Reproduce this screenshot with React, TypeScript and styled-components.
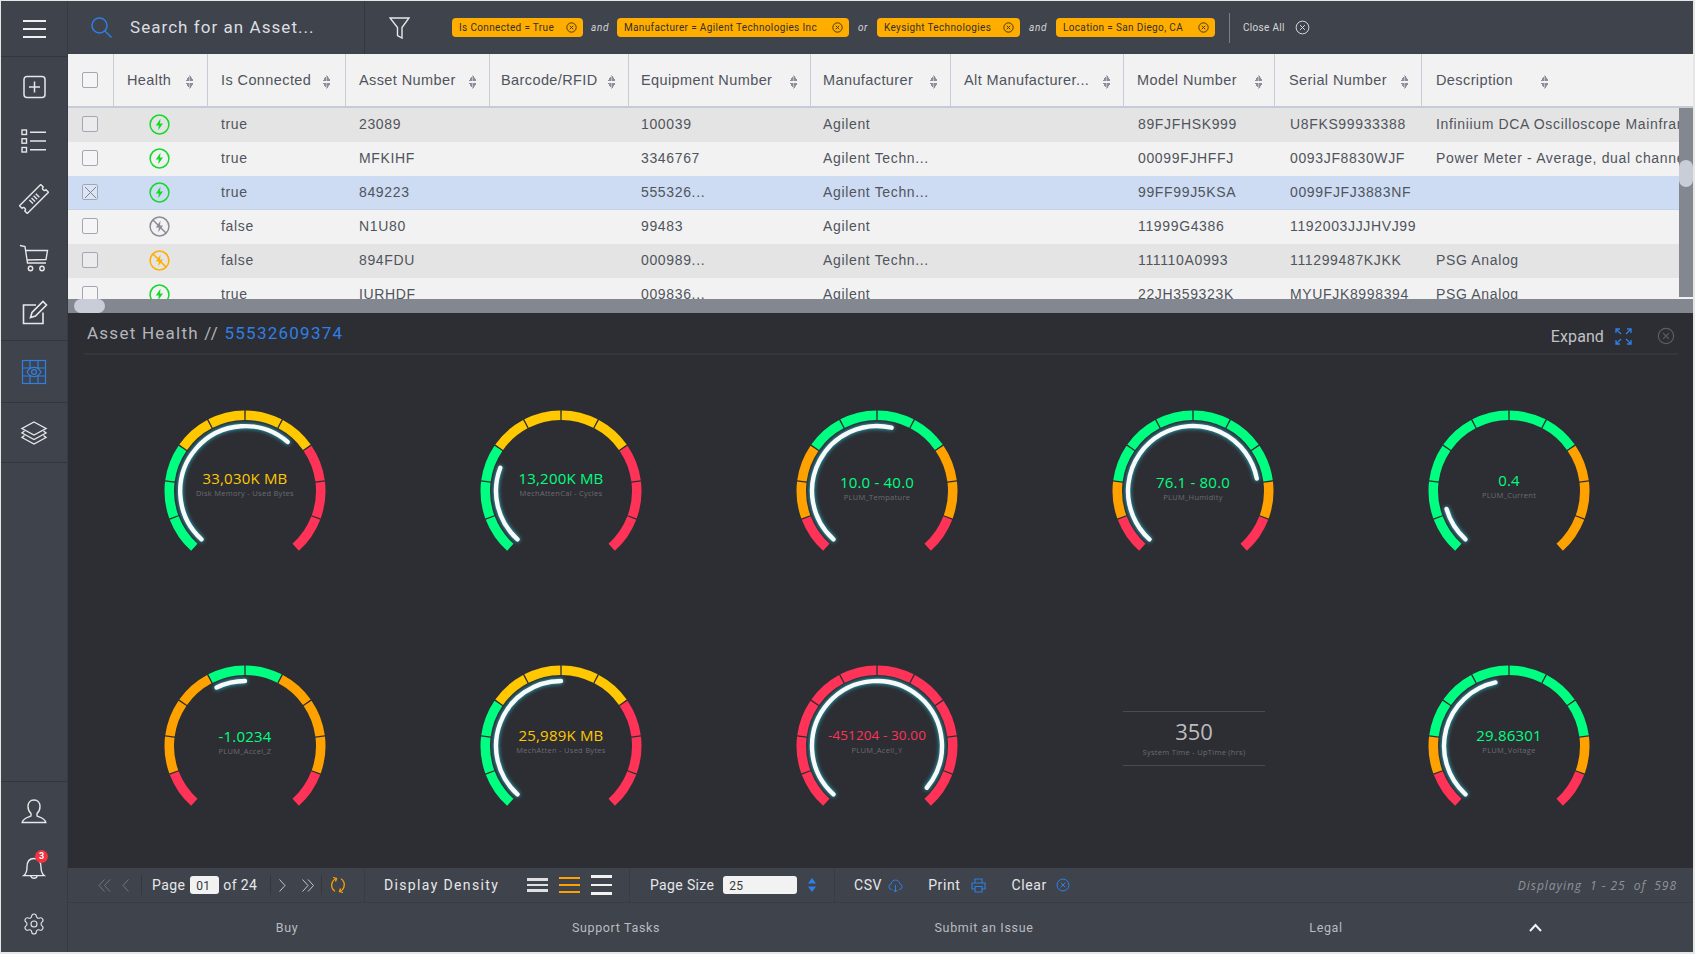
import React from 'react';
import styled, {createGlobalStyle} from 'styled-components';
import {Settings} from 'lucide-react';

const GlobalStyle = createGlobalStyle`
  html, body {
    margin: 0;
    padding: 0;
    background: #e6e6e6;
    overflow: hidden;
  }
  * {
    box-sizing: border-box;
  }
`;

const GREEN = '#00ff80';
const YELLOW = '#ffc800';
const ORANGE = '#ffa200';
const RED = '#ff3358';
const BLUE = '#2f7fe6';

const ui = `Roboto, "Liberation Sans", sans-serif`;
const tableFont = `"Liberation Sans", Arial, sans-serif`;
const gaugeFont = `"Open Sans", "Noto Sans", sans-serif`;

/* ---------- icons ---------- */

type IconProps = {size?: number; color?: string; sw?: number};

const Ico = ({size = 30, color = '#e6e7e9', sw = 1.4, children}: IconProps & {children: React.ReactNode}) => (
  <svg width={size} height={size} viewBox="0 0 30 30" fill="none" stroke={color} strokeWidth={sw} style={{display: 'block', flex: 'none'}}>
    {children}
  </svg>
);

const PlusBoxIcon = () => (
  <Ico sw={1.5}>
    <rect x="5" y="4.5" width="21" height="21" rx="3" />
    <path d="M15.5 9.5V20.5M10 15H21" />
  </Ico>
);
const ListIcon = () => (
  <Ico sw={1.4}>
    <rect x="3" y="4" width="4.5" height="4.5" />
    <rect x="3" y="12.7" width="4.5" height="4.5" />
    <rect x="3" y="21.5" width="4.5" height="4.5" />
    <path d="M11 6.2H27M11 15H27M11 23.7H27" />
  </Ico>
);
const TicketIcon = () => (
  <Ico sw={1.4}>
    <g transform="rotate(-45 15 15)">
      <path d="M0 9.5H30V13a2 2 0 0 0 0 4v3.5H0V17a2 2 0 0 0 0-4z" />
      <path d="M11 12.5V17.5M14 12.5V17.5M17 12.5V17.5M20 12.5V17.5" />
    </g>
  </Ico>
);
const CartIcon = () => (
  <Ico sw={1.4}>
    <path d="M1 2.5L6 3.5L8.5 20H27M7 7.5H28.5L27 16.5L8 17" />
    <circle cx="11.5" cy="25.5" r="2.2" />
    <circle cx="23" cy="25.5" r="2.2" />
  </Ico>
);
const EditIcon = () => (
  <Ico sw={1.6}>
    <path d="M24 15.5V26.5H4.5V8H17" />
    <path d="M11.5 20.5L13 15.5L24 4.5L27.5 8L16.5 19z" />
  </Ico>
);
const EyeGridIcon = () => (
  <Ico color={BLUE} sw={1.2}>
    <rect x="3.5" y="3.5" width="23" height="23" />
    <path d="M3.5 11H26.5M3.5 19H26.5M11 3.5V26.5M19 3.5V26.5" />
    <path d="M8 15C10 11.6 12.5 10.4 15 10.4S20 11.6 22 15C20 18.4 17.5 19.6 15 19.6S10 18.4 8 15z" fill="#3f434c" />
    <circle cx="15" cy="15" r="2.4" />
  </Ico>
);
const LayersIcon = () => (
  <Ico sw={1.4}>
    <path d="M15 4L27 10.5L15 17L3 10.5z" />
    <path d="M5.5 13L3 15L15 21.5L27 15L24.5 13" />
    <path d="M5.5 17.5L3 19.5L15 26L27 19.5L24.5 17.5" />
  </Ico>
);
const UserIcon = () => (
  <Ico sw={1.4}>
    <path d="M15 4c-4 0-6 3-6 6.5 0 3 1.2 5.4 3 7v2.5c-2.5 1.3-7.8 1.8-8.8 6.5h23.6c-1-4.7-6.3-5.2-8.8-6.5v-2.5c1.8-1.6 3-4 3-7C21 7 19 4 15 4z" />
  </Ico>
);
const BellIcon = () => (
  <Ico sw={1.4}>
    <path d="M15 5.5c-5 0-7 3.8-7 8.5 0 4.5-1 6.8-3.2 8.6h20.4C23 20.8 22 18.5 22 14c0-4.7-2-8.5-7-8.5z" />
    <path d="M11.8 22.8a3.3 3.3 0 0 0 6.4 0" />
  </Ico>
);

const HealthIcon = ({state}: {state: 'on' | 'off' | 'warn'}) => {
  const color = state === 'on' ? '#12d92a' : state === 'warn' ? '#ffae00' : '#8a8d97';
  return (
    <svg width="21" height="21" viewBox="0 0 21 21" style={{display: 'block'}}>
      <circle cx="10.5" cy="10.5" r="9.4" fill="none" stroke={color} strokeWidth="1.5" />
      <path d="M11.5 4.8L6.8 11.4H9.8L9.2 16.2L14 9.5H11z" fill={color} />
      {state !== 'on' && <path d="M4 4L17 17" stroke={color} strokeWidth="1.5" />}
    </svg>
  );
};

const CircleX = ({size = 11, color = '#4a3a10', sw = 1}: IconProps) => (
  <svg width={size} height={size} viewBox="0 0 20 20" fill="none" stroke={color} strokeWidth={sw * (20 / size)} style={{display: 'block', flex: 'none'}}>
    <circle cx="10" cy="10" r="8.5" />
    <path d="M6.8 6.8L13.2 13.2M13.2 6.8L6.8 13.2" />
  </svg>
);

const SortIcon = styled.span`
  display: block;
  flex: none;
  width: 7px;
  height: 14px;
  margin-top: 3px;
  background:
    linear-gradient(to top left, #8b8f99 50%, transparent 51%) 0 0 / 3.5px 6px no-repeat,
    linear-gradient(to top right, #8b8f99 50%, transparent 51%) 3.5px 0 / 3.5px 6px no-repeat,
    linear-gradient(to bottom left, #8b8f99 50%, transparent 51%) 0 8px / 3.5px 6px no-repeat,
    linear-gradient(to bottom right, #8b8f99 50%, transparent 51%) 3.5px 8px / 3.5px 6px no-repeat;
`;

/* ---------- layout ---------- */

const Frame = styled.div`
  display: flex;
  width: 1692px;
  height: 951px;
  margin: 1px 2px 2px 1px;
  font-family: ${ui};
  background: #3f434c;
  overflow: hidden;
`;

const Sidebar = styled.nav`
  display: flex;
  flex-direction: column;
  flex: none;
  width: 67px;
  background: #3f434c;
  border-right: 1px solid #383b43;
`;

const SideTop = styled.div`
  display: flex;
  align-items: center;
  justify-content: center;
  flex: none;
  height: 56px;
  border-bottom: 1px solid #33363d;
`;

const Hamburger = styled.span`
  display: block;
  width: 23px;
  height: 18px;
  border-top: 2px solid #f0f0f0;
  border-bottom: 2px solid #f0f0f0;
  position: relative;
  &::after {
    content: '';
    position: absolute;
    left: 0;
    right: 0;
    top: 6px;
    height: 2px;
    background: #f0f0f0;
  }
`;

const SideGroup = styled.div`
  display: flex;
  flex-direction: column;
  flex: none;
  height: 284px;
  border-bottom: 1px solid #33363d;
`;

const SideItem = styled.div<{$h: number}>`
  position: relative;
  display: flex;
  align-items: center;
  justify-content: center;
  flex: none;
  height: ${p => p.$h}px;
`;

const SideSection = styled.div<{$h: number}>`
  display: flex;
  align-items: center;
  justify-content: center;
  flex: none;
  height: ${p => p.$h}px;
  border-bottom: 1px solid #33363d;
`;

const SideSpacer = styled.div`
  flex: 1;
  border-bottom: 1px solid #33363d;
`;

const Badge = styled.span`
  position: absolute;
  left: 34px;
  top: 10px;
  width: 13px;
  height: 13px;
  border-radius: 50%;
  background: #f5333f;
  color: #fff;
  font-size: 9px;
  font-weight: 700;
  line-height: 13px;
  text-align: center;
`;

const Main = styled.div`
  display: flex;
  flex-direction: column;
  flex: 1;
  min-width: 0;
`;

const TopBar = styled.header`
  display: flex;
  align-items: center;
  flex: none;
  height: 53px;
  background: #3f434c;
`;

const SearchBox = styled.div`
  display: flex;
  align-items: center;
  gap: 18px;
  flex: none;
  width: 297px;
  height: 100%;
  padding-left: 23px;
  border-right: 1px solid #33373e;
`;

const SearchText = styled.span`
  margin-bottom: 1px;
  color: #dcdee1;
  font-size: 17px;
  letter-spacing: 1.05px;
`;

const FilterSlot = styled.div`
  display: flex;
  justify-content: center;
  flex: none;
  width: 87px;
  padding-right: 19px;
`;

const Chip = styled.div<{$w: number}>`
  display: flex;
  align-items: center;
  justify-content: space-between;
  flex: none;
  width: ${p => p.$w}px;
  height: 19px;
  padding: 0 6px 0 7px;
  border-radius: 4px;
  background: #ffae00;
  color: #33302a;
  font-size: 10px;
  letter-spacing: 0.35px;
  white-space: nowrap;
`;

const Joiner = styled.span<{$w: number}>`
  flex: none;
  width: ${p => p.$w}px;
  color: #d5d7da;
  font-size: 10px;
  font-style: italic;
  letter-spacing: 0.6px;
  text-align: center;
`;

const CloseAll = styled.div`
  display: flex;
  align-items: center;
  gap: 10px;
  height: 30px;
  margin-left: 14px;
  padding-left: 13px;
  border-left: 1px solid #7b7e85;
  color: #d5d7da;
  font-size: 10px;
  letter-spacing: 0.3px;
`;

/* ---------- table ---------- */

const Table = styled.section`
  display: flex;
  flex-direction: column;
  flex: none;
  height: 259px;
  background: #f2f2f2;
  font-family: ${tableFont};
`;

const HeadRow = styled.div`
  display: flex;
  flex: none;
  height: 54px;
  background: #f2f2f2;
  border-bottom: 2px solid #c6cbd8;
`;

const HeadCell = styled.div<{$w: number; $pad: number; $sortRight: number}>`
  display: flex;
  justify-content: space-between;
  align-items: center;
  flex: none;
  width: ${p => p.$w}px;
  padding: 0 ${p => p.$sortRight}px 0 ${p => p.$pad}px;
  border-right: 1px solid #c6cbd8;
  color: #50545d;
  font-size: 14.5px;
  letter-spacing: 0.4px;
  white-space: nowrap;
  &:last-child {
    border-right: 0;
  }
`;

const BodyWrap = styled.div`
  display: flex;
  flex: 1;
  min-height: 0;
`;

const Rows = styled.div`
  flex: 1;
  min-width: 0;
  overflow: hidden;
`;

const Row = styled.div<{$tone: 'grey' | 'plain' | 'selected'}>`
  display: flex;
  align-items: center;
  height: 34px;
  background: ${p => (p.$tone === 'grey' ? '#e4e4e4' : p.$tone === 'selected' ? '#cddcf2' : '#f2f2f2')};
  border-bottom: 1px solid ${p => (p.$tone === 'selected' ? '#c6d2e6' : 'transparent')};
`;

const Cell = styled.div<{$w?: number; $pad: number}>`
  display: flex;
  align-items: center;
  flex: ${p => (p.$w ? 'none' : 1)};
  width: ${p => (p.$w ? `${p.$w}px` : 'auto')};
  min-width: 0;
  padding-left: ${p => p.$pad}px;
  padding-bottom: 1px;
  color: #50545d;
  font-size: 14px;
  letter-spacing: 0.65px;
  white-space: nowrap;
  overflow: hidden;
`;

const CheckBox = styled.span`
  display: flex;
  align-items: center;
  justify-content: center;
  width: 16px;
  height: 16px;
  border: 1.5px solid #a3a7b3;
  border-radius: 2px;
  background: rgba(255, 255, 255, 0.25);
`;

const VTrack = styled.div`
  flex: none;
  width: 14px;
  height: 189px;
  background: #83878f;
  padding-top: 52px;
`;

const VThumb = styled.div`
  height: 27px;
  border-radius: 7px;
  background: #c8cdd8;
`;

const HTrack = styled.div`
  flex: none;
  height: 14px;
  background: #83878f;
  padding-left: 6px;
`;

const HThumb = styled.div`
  width: 31px;
  height: 14px;
  border-radius: 7px;
  background: #c8cdd8;
`;

/* ---------- health panel ---------- */

const Panel = styled.section`
  flex: none;
  height: 555px;
  background: #2d2e33;
  overflow: hidden;
`;

const PanelHead = styled.div`
  display: flex;
  align-items: center;
  justify-content: space-between;
  height: 42px;
  margin: 0 15px 0 16px;
  padding: 0 3px;
  border-bottom: 2px solid #35363b;
`;

const PanelTitle = styled.div`
  color: #b3b5ba;
  font-size: 17px;
  letter-spacing: 1.25px;
  span {
    color: ${BLUE};
  }
`;

const PanelActions = styled.div`
  display: flex;
  align-items: center;
  margin: 6px 0 0 0;
  color: #c0c2c6;
  font-size: 16px;
  letter-spacing: 0.1px;
  svg:first-of-type {
    margin-left: 11px;
    margin-right: 25px;
  }
`;

const GaugeGrid = styled.div`
  display: grid;
  grid-template-columns: repeat(5, 316px);
  grid-auto-rows: 245px;
  row-gap: 10px;
  padding: 13px 0 0 19px;
`;

const GaugeCell = styled.div`
  display: flex;
  align-items: center;
  justify-content: center;
`;

const GaugeBox = styled.div`
  position: relative;
  width: 200px;
  height: 200px;
`;

const Needle = styled.path`
  fill: none;
  stroke: #f8fafa;
  stroke-width: 4.4px;
  stroke-linecap: round;
  filter: drop-shadow(0 0 2px #23c4d8);
`;

const GaugeText = styled.div<{$top: number}>`
  position: absolute;
  left: 0;
  right: 0;
  top: ${p => p.$top}px;
  font-family: ${gaugeFont};
  text-align: center;
  white-space: nowrap;
`;

const GaugeValue = styled.div<{$color: string; $small?: boolean}>`
  height: 19px;
  color: ${p => p.$color};
  font-size: ${p => (p.$small ? 13.5 : 15)}px;
  line-height: 18px;
  letter-spacing: ${p => (p.$small ? 0.1 : 0.2)}px;
`;

const GaugeLabel = styled.div`
  height: 10px;
  color: #6a6c72;
  font-size: 7.5px;
  line-height: 10px;
  letter-spacing: 0.28px;
`;

const UptimeCard = styled.div`
  width: 142px;
  height: 55px;
  margin: 0 0 14px 2px;
  border-top: 1.5px solid #4a4b50;
  border-bottom: 1.5px solid #4a4b50;
  font-family: ${gaugeFont};
  text-align: center;
`;

const UptimeValue = styled.div`
  margin-top: 5px;
  height: 28px;
  color: #bcbcbe;
  font-size: 22px;
  line-height: 28px;
`;

const UptimeLabel = styled(GaugeLabel)`
  margin-top: 2px;
`;

/* ---------- toolbar + footer ---------- */

const Toolbar = styled.div`
  display: flex;
  align-items: center;
  flex: none;
  height: 35px;
  background: #3f434c;
  border-bottom: 1px solid #383c44;
  color: #e6e7e9;
  font-size: 14px;
`;

const ToolGroup = styled.div<{$w: number; $pad: number}>`
  display: flex;
  align-items: center;
  flex: none;
  width: ${p => p.$w}px;
  height: 100%;
  padding-left: ${p => p.$pad}px;
  border-right: 1px solid #383c44;
`;

const Sep = styled.span<{$l: number}>`
  flex: none;
  width: 1px;
  height: 20px;
  margin-left: ${p => p.$l}px;
  background: #33373e;
`;

const ToolText = styled.span<{$l?: number; $sp?: number}>`
  flex: none;
  margin-left: ${p => p.$l ?? 0}px;
  letter-spacing: ${p => p.$sp ?? 0.4}px;
  white-space: nowrap;
`;

const Slot = styled.span<{$l?: number}>`
  display: block;
  flex: none;
  margin-left: ${p => p.$l ?? 0}px;
`;

const SmallInput = styled.input<{$w: number; $l: number}>`
  flex: none;
  width: ${p => p.$w}px;
  height: 18px;
  margin-left: ${p => p.$l}px;
  padding: 2px 0 0 6px;
  border: 0;
  border-radius: 3px;
  background: #f2f2f2;
  color: #33363c;
  font-family: ${ui};
  font-size: 12px;
  letter-spacing: 0.3px;
`;

const Density = styled.span<{$color: string; $gap: number; $l: number}>`
  display: flex;
  flex-direction: column;
  flex: none;
  gap: ${p => p.$gap}px;
  width: 21px;
  margin-left: ${p => p.$l}px;
  i {
    display: block;
    height: 2.5px;
    background: ${p => p.$color};
  }
`;

const Displaying = styled.span`
  margin-left: auto;
  margin-right: 16px;
  color: #8f9399;
  font-family: ${gaugeFont};
  font-size: 12px;
  font-style: italic;
  letter-spacing: 0.95px;
  white-space: pre;
`;

const Footer = styled.footer`
  display: grid;
  grid-template-columns: 438px 220px 516px 168px 250px;
  align-items: center;
  flex: 1;
  background: #3f434c;
  color: #b9bcc1;
  font-size: 12.5px;
  letter-spacing: 0.65px;
`;

const FootLink = styled.span`
  text-align: center;
`;

/* ---------- data ---------- */

const cols = [
  {w: 46, pad: 14, sort: 0, title: ''},
  {w: 94, pad: 13, sort: 14, title: 'Health'},
  {w: 138, pad: 13, sort: 15, title: 'Is Connected'},
  {w: 144, pad: 13, sort: 13, title: 'Asset Number'},
  {w: 139, pad: 11, sort: 13, title: 'Barcode/RFID'},
  {w: 182, pad: 12, sort: 13, title: 'Equipment Number'},
  {w: 140, pad: 12, sort: 13, title: 'Manufacturer'},
  {w: 173, pad: 13, sort: 13, title: 'Alt Manufacturer...'},
  {w: 151, pad: 13, sort: 12, title: 'Model Number'},
  {w: 147, pad: 14, sort: 13, title: 'Serial Number'},
  {w: 271, pad: 14, sort: 145, title: 'Description'},
];

type RowData = {
  health: 'on' | 'off' | 'warn';
  tone: 'grey' | 'plain' | 'selected';
  vals: string[];
};

const rows: RowData[] = [
  {health: 'on', tone: 'grey', vals: ['true', '23089', '', '100039', 'Agilent', '', '89FJFHSK999', 'U8FKS99933388', 'Infiniium DCA Oscilloscope Mainframe']},
  {health: 'on', tone: 'plain', vals: ['true', 'MFKIHF', '', '3346767', 'Agilent Techn...', '', '00099FJHFFJ', '0093JF8830WJF', 'Power Meter - Average, dual channel']},
  {health: 'on', tone: 'selected', vals: ['true', '849223', '', '555326...', 'Agilent Techn...', '', '99FF99J5KSA', '0099FJFJ3883NF', '']},
  {health: 'off', tone: 'plain', vals: ['false', 'N1U80', '', '99483', 'Agilent', '', '11999G4386', '1192003JJJHVJ99', '']},
  {health: 'warn', tone: 'grey', vals: ['false', '894FDU', '', '000989...', 'Agilent Techn...', '', '111110A0993', '111299487KJKK', 'PSG Analog']},
  {health: 'on', tone: 'plain', vals: ['true', 'IURHDF', '', '009836...', 'Agilent', '', '22JH359323K', 'MYUFJK8998394', 'PSG Analog']},
];

const polar = (r: number, deg: number) => {
  const a = (deg * Math.PI) / 180;
  return `${(100 + r * Math.sin(a)).toFixed(2)} ${(100 - r * Math.cos(a)).toFixed(2)}`;
};

const arc = (r: number, from: number, to: number) =>
  `M${polar(r, from)} A${r} ${r} 0 ${to - from > 180 ? 1 : 0} 1 ${polar(r, to)}`;

const STEP = 27.6;
const START = -138;

type GaugeData = {
  value: string;
  label: string;
  color: string;
  bands: string[];
  from?: number;
  to: number;
  top: number;
  small?: boolean;
};

const g = GREEN, y = YELLOW, o = ORANGE, r = RED;
const memBands = [g, g, g, y, y, y, y, r, r, r];
const rangeBands = [r, o, o, g, g, g, g, o, o, r];
const wideBands = [r, o, g, g, g, g, g, g, o, r];

const gauges: GaugeData[] = [
  {value: '33,030K MB', label: 'Disk Memory - Used Bytes', color: y, bands: memBands, to: 41, top: 78.5},
  {value: '13,200K MB', label: 'MechAttenCal - Cycles', color: g, bands: memBands, to: -69, top: 78.5},
  {value: '10.0 - 40.0', label: 'PLUM_Tempature', color: g, bands: rangeBands, to: 13, top: 82},
  {value: '76.1 - 80.0', label: 'PLUM_Humidity', color: g, bands: wideBands, to: 79, top: 82},
  {value: '0.4', label: 'PLUM_Current', color: g, bands: [g, g, g, g, g, g, g, o, o, o], to: -106, top: 80},
  {value: '-1.0234', label: 'PLUM_Accel_Z', color: g, bands: [r, o, o, o, g, g, o, o, o, r], from: -26, to: 0, top: 81.5},
  {value: '25,989K MB', label: 'MechAtten - Used Bytes', color: y, bands: memBands, to: 0, top: 80.5},
  {value: '-451204 - 30.00', label: 'PLUM_Acell_Y', color: r, bands: [r, r, r, r, r, r, r, r, r, r], to: 130, top: 80.5, small: true},
  {value: '29.86301', label: 'PLUM_Voltage', color: g, bands: wideBands, to: -12, top: 80.5},
];

const Gauge = ({value, label, color, bands, from = START, to, top, small}: GaugeData) => (
  <GaugeCell>
    <GaugeBox>
      <svg width="200" height="200" viewBox="0 0 200 200" style={{display: 'block', overflow: 'visible'}}>
        {bands.map((c, i) => (
          <path
            key={i}
            d={arc(75.75, START + i * STEP + (i ? 0.5 : 0), START + (i + 1) * STEP - (i < 9 ? 0.5 : 0))}
            fill="none"
            stroke={c}
            strokeWidth="9.5"
          />
        ))}
        <Needle d={arc(65, from, to)} />
      </svg>
      <GaugeText $top={top}>
        <GaugeValue $color={color} $small={small}>{value}</GaugeValue>
        <GaugeLabel>{label}</GaugeLabel>
      </GaugeText>
    </GaugeBox>
  </GaugeCell>
);

const Chevrons = ({dir, double, color = '#71757d'}: {dir: 'l' | 'r'; double?: boolean; color?: string}) => (
  <svg width={double ? 13 : 8} height="13" viewBox={double ? '0 0 13 13' : '0 0 8 13'} fill="none" stroke={color} strokeWidth="1" style={{display: 'block'}}>
    {dir === 'l' ? (
      <>
        <path d="M6.5 0.5L1 6.5L6.5 12.5" />
        {double && <path d="M12 0.5L6.5 6.5L12 12.5" />}
      </>
    ) : (
      <>
        <path d="M1.5 0.5L7 6.5L1.5 12.5" />
        {double && <path d="M7 0.5L12.5 6.5L7 12.5" />}
      </>
    )}
  </svg>
);

export default function App() {
  return (
    <>
      <GlobalStyle />
      <Frame>
        <Sidebar>
          <SideTop>
            <Hamburger />
          </SideTop>
          <SideGroup>
            <SideItem $h={60}><PlusBoxIcon /></SideItem>
            <SideItem $h={48}><ListIcon /></SideItem>
            <SideItem $h={68}><TicketIcon /></SideItem>
            <SideItem $h={50}><CartIcon /></SideItem>
            <SideItem $h={57}><EditIcon /></SideItem>
          </SideGroup>
          <SideSection $h={62}><EyeGridIcon /></SideSection>
          <SideSection $h={60}><LayersIcon /></SideSection>
          <SideSpacer />
          <SideItem $h={58}><UserIcon /></SideItem>
          <SideItem $h={55}>
            <BellIcon />
            <Badge>3</Badge>
          </SideItem>
          <SideItem $h={57}><Settings size={24} color="#e6e7e9" strokeWidth={1.1} /></SideItem>
        </Sidebar>

        <Main>
          <TopBar>
            <SearchBox>
              <svg width="21" height="21" viewBox="0 0 21 21" fill="none" stroke={BLUE} strokeWidth="1.5" style={{display: 'block', flex: 'none'}}>
                <circle cx="8.5" cy="8.5" r="7.5" />
                <path d="M14 14L20.5 20.5" />
              </svg>
              <SearchText>Search for an Asset...</SearchText>
            </SearchBox>
            <FilterSlot>
              <svg width="21" height="22" viewBox="0 0 21 22" fill="none" stroke="#e6e7e9" strokeWidth="1.4" style={{display: 'block'}}>
                <path d="M1 1H20L13 10.5V21L8.5 18.5V10.5z" />
              </svg>
            </FilterSlot>
            <Chip $w={131}>Is Connected = True<CircleX /></Chip>
            <Joiner $w={34}>and</Joiner>
            <Chip $w={232}>Manufacturer = Agilent Technologies Inc<CircleX /></Chip>
            <Joiner $w={28}>or</Joiner>
            <Chip $w={143}>Keysight Technologies<CircleX /></Chip>
            <Joiner $w={36}>and</Joiner>
            <Chip $w={159}>Location = San Diego, CA<CircleX /></Chip>
            <CloseAll>
              Close All
              <CircleX size={15} color="#d5d7da" />
            </CloseAll>
          </TopBar>

          <Table>
            <HeadRow>
              {cols.map((c, i) => (
                <HeadCell key={i} $w={c.w} $pad={c.pad} $sortRight={c.sort}>
                  {i === 0 ? <CheckBox /> : <>{c.title}<SortIcon /></>}
                </HeadCell>
              ))}
            </HeadRow>
            <BodyWrap>
              <Rows>
                {rows.map((row, i) => (
                  <Row key={i} $tone={row.tone}>
                    <Cell $w={cols[0].w} $pad={14}>
                      <CheckBox>
                        {row.tone === 'selected' && (
                          <svg width="13" height="13" viewBox="0 0 13 13" stroke="#7d818c" strokeWidth="1" style={{display: 'block'}}>
                            <path d="M1 1L12 12M12 1L1 12" />
                          </svg>
                        )}
                      </CheckBox>
                    </Cell>
                    <Cell $w={cols[1].w} $pad={35}><HealthIcon state={row.health} /></Cell>
                    {row.vals.map((v, j) => (
                      <Cell key={j} $w={j < 8 ? cols[j + 2].w : undefined} $pad={j === 6 ? 14 : j === 7 ? 15 : cols[j + 2].pad}>{v}</Cell>
                    ))}
                  </Row>
                ))}
              </Rows>
              <VTrack><VThumb /></VTrack>
            </BodyWrap>
            <HTrack><HThumb /></HTrack>
          </Table>

          <Panel>
            <PanelHead>
              <PanelTitle>Asset Health // <span>55532609374</span></PanelTitle>
              <PanelActions>
                Expand
                <svg width="17" height="17" viewBox="0 0 17 17" fill="none" stroke={BLUE} strokeWidth="1.3" style={{display: 'block'}}>
                  <path d="M1 5V1H5M1 1L6 6M16 5V1H12M16 1L11 6M1 12V16H5M1 16L6 11M16 12V16H12M16 16L11 11" />
                </svg>
                <CircleX size={18} color="#5b5e64" sw={1.2} />
              </PanelActions>
            </PanelHead>
            <GaugeGrid>
              {gauges.slice(0, 8).map(d => <Gauge key={d.label} {...d} />)}
              <GaugeCell>
                <UptimeCard>
                  <UptimeValue>350</UptimeValue>
                  <UptimeLabel>System Time - UpTime (hrs)</UptimeLabel>
                </UptimeCard>
              </GaugeCell>
              <Gauge {...gauges[8]} />
            </GaugeGrid>
          </Panel>

          <Toolbar>
            <ToolGroup $w={297} $pad={30}>
              <Chevrons dir="l" double />
              <Slot $l={11}><Chevrons dir="l" /></Slot>
              <Sep $l={11} />
              <ToolText $l={10}>Page</ToolText>
              <SmallInput $w={29} $l={5} readOnly value="01" />
              <ToolText $l={4}>of 24</ToolText>
              <Sep $l={13} />
              <Slot $l={7}><Chevrons dir="r" color="#c4c6ca" /></Slot>
              <Slot $l={15}><Chevrons dir="r" double color="#c4c6ca" /></Slot>
              <Sep $l={7} />
              <Slot $l={8}>
                <svg width="16" height="18" viewBox="0 0 16 18" fill="none" stroke={ORANGE} strokeWidth="1.3" style={{display: 'block'}}>
                  <path d="M6 2.5C2.5 4 1 8 2 11.5C2.5 13 3.5 14.5 5 15.3M10 15.5C13.5 14 15 10 14 6.5C13.5 5 12.5 3.5 11 2.7" />
                  <path d="M3 1.5L6.5 2.5L5.5 5.5M13 16.5L9.5 15.5L10.5 12.5" />
                </svg>
              </Slot>
            </ToolGroup>
            <ToolGroup $w={265} $pad={19}>
              <ToolText $sp={1.35}>Display Density</ToolText>
              <Density $color="#dfe0e3" $gap={3} $l={28}><i /><i /><i /></Density>
              <Density $color={ORANGE} $gap={4.5} $l={11}><i /><i /><i /></Density>
              <Density $color="#f2f2f2" $gap={6} $l={11}><i /><i /><i /></Density>
            </ToolGroup>
            <ToolGroup $w={205} $pad={20}>
              <ToolText $sp={0.35}>Page Size</ToolText>
              <SmallInput $w={74} $l={9} readOnly value="25" />
              <Slot $l={11}>
                <svg width="8" height="14" viewBox="0 0 8 14" style={{display: 'block'}}>
                  <path d="M4 0L8 5.5H0zM4 14L0 8.5H8z" fill={BLUE} />
                </svg>
              </Slot>
            </ToolGroup>
            <ToolText $l={19} $sp={0.6}>CSV</ToolText>
            <Slot $l={6}>
              <svg width="15" height="15" viewBox="0 0 15 15" fill="none" stroke={BLUE} strokeWidth="1" style={{display: 'block'}}>
                <path d="M4 11.5H3.5A2.8 2.8 0 0 1 3 6C3.5 3.5 5.5 2 7.5 2C9.8 2 11.5 3.7 12 6A2.8 2.8 0 0 1 11.5 11.5H11M7.5 7V14M5.5 12L7.5 14L9.5 12" />
              </svg>
            </Slot>
            <ToolText $l={25} $sp={0.6}>Print</ToolText>
            <Slot $l={11}>
              <svg width="15" height="15" viewBox="0 0 15 15" fill="none" stroke={BLUE} strokeWidth="1.1" style={{display: 'block'}}>
                <path d="M4 5V1H11V5M4 11H1V5H14V11H11M4 8.5H11V14H4z" />
              </svg>
            </Slot>
            <ToolText $l={25} $sp={0.6}>Clear</ToolText>
            <Slot $l={9}><CircleX size={14} color={BLUE} /></Slot>
            <Displaying>{'Displaying  1 - 25  of  598'}</Displaying>
          </Toolbar>

          <Footer>
            <FootLink>Buy</FootLink>
            <FootLink>Support Tasks</FootLink>
            <FootLink>Submit an Issue</FootLink>
            <FootLink>Legal</FootLink>
            <FootLink>
              <svg width="13" height="9" viewBox="0 0 13 9" fill="none" stroke="#f2f2f2" strokeWidth="2" style={{display: 'inline-block'}}>
                <path d="M1 8L6.5 2L12 8" />
              </svg>
            </FootLink>
          </Footer>
        </Main>
      </Frame>
    </>
  );
}
